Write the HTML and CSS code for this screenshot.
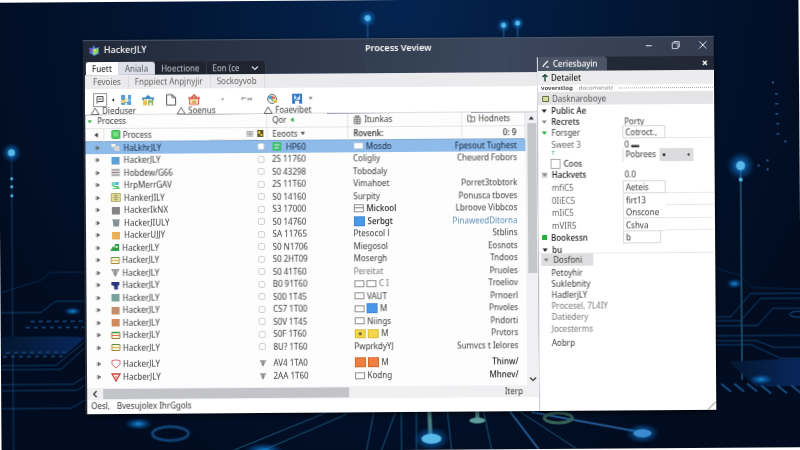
FILE: index.html
```html
<!DOCTYPE html>
<html lang="en">
<head>
<meta charset="utf-8">
<title>Process Veview</title>
<link rel="stylesheet" href="styles.css">
</head>
<body>
<svg width="0" height="0" class="defs" aria-hidden="true">
  <symbol id="play" viewBox="0 0 6 6"><path d="M1 1v4M2 1l3 2-3 2z" fill="currentColor" stroke="currentColor" stroke-width=".4"/></symbol>
  <symbol id="left" viewBox="0 0 6 6"><path d="M4.500 .5v5L1 3z" fill="currentColor"/></symbol>
  <symbol id="down" viewBox="0 0 6 6"><path d="M.5 1.500h5L3 5z" fill="currentColor"/></symbol>
  <symbol id="warn" viewBox="0 0 10 8"><path d="M5 1l4 6.500H1z" fill="none" stroke="#555" stroke-width=".9"/></symbol>
  <symbol id="square" viewBox="0 0 10 9"><path d="M1 1h8v7.500H1z" fill="currentColor"/></symbol>
  <symbol id="list" viewBox="0 0 10 9"><path d="M.5 .5h9v8h-9z" fill="#ddd"/><path d="M1 2h8M1 4.500h8M1 7h8" stroke="#8b8b8b"/><path d="M1 4.500h3" stroke="#c66"/></symbol>
  <symbol id="bars" viewBox="0 0 10 9"><path d="M1 1.500h8v6H1z" fill="#fbf6d8" stroke="#a08c3c"/><path d="M1 1.500h8" stroke="#5b8f43"/><path d="M2 4.500h6" stroke="#dbb54e"/></symbol>
  <symbol id="bars-red" viewBox="0 0 10 9"><path d="M1 1.500h8v6H1z" fill="#f5f7d8" stroke="#a37a3c"/><path d="M1 1.500h8" stroke="#3f9a4b" stroke-width="1.500"/><path d="M1 4.500h8" stroke="#d96a4a"/></symbol>
  <symbol id="funnel" viewBox="0 0 10 9"><path d="M1 1h8L5.500 8.500h-1z" fill="currentColor"/><path d="M3.500 1v4M6.500 1v4" stroke="#fff" stroke-width=".5"/></symbol>
  <symbol id="shield" viewBox="0 0 10 10"><path d="M1 1.500l4-.500 4 .5v4L5 9 1 5.500z" fill="#fff" stroke="#dc6b6b"/></symbol>
  <symbol id="alert" viewBox="0 0 10 9"><path d="M1 1h8L5 8z" fill="#fff" stroke="#c9473a" stroke-width="1.300"/><path d="M5 2.500v3" stroke="#c9473a"/></symbol>
</svg>
<div class="scene">
  <svg class="backdrop" viewBox="0 0 800 450" preserveAspectRatio="xMidYMid slice" aria-hidden="true">
    <defs>
      <radialGradient id="glow"><stop offset="0" stop-color="#1c9bf0" stop-opacity=".9"/><stop offset="1" stop-color="#0560c0" stop-opacity="0"/></radialGradient>
      <linearGradient id="chip" x2="1"><stop offset="0" stop-color="#04172f"/><stop offset="1" stop-color="#08275c"/></linearGradient>
    </defs>
    <g fill="none" stroke="#1d66a8" stroke-width="1" opacity=".75">
      <path d="M12 150V450" opacity=".65"/>
      <path d="M741 168V382" stroke="#3fa0c8"/>
      <path d="M369 18V72M505 26V72M519 24V72" stroke="#2b80c0"/>
      <path d="M0 310h40l15-11h30M0 363h55l32-26M0 367h60l27-24M0 382h72l15-9M0 388h76l11-7M0 406h70l17-10" opacity=".7"/>
      <path d="M0 290l40-12 10-8h36" opacity=".4"/>
      <path d="M715 319h15l20-23h50M715 323h25l20-22h40M715 328h42l15-17h28M715 338h85M715 343h40l18 7h27M715 347h35l30 14h20" opacity=".75"/>
      <path d="M715 270l25 8 12 12 48 2" opacity=".35"/>
      <path d="M230 450l100-40M260 450l85-36v-6M365 450l8-40M380 450l15-40M400 450v-40M415 450v-40M450 450l-4-40M490 450l-8-40M575 450l-60-40" stroke="#1f6d92"/>
      <path d="M428 410l1 26M476 410v10" stroke="#60a7a0" stroke-width="4"/>
      <path d="M530 413l105 20M507 410l30 40" stroke="#2f72b7" stroke-width="2"/>
      <ellipse cx="169" cy="432" rx="18" ry="7" stroke="#14508c" stroke-width="3"/>
      <ellipse cx="557" cy="419" rx="14" ry="5" stroke="#457a66" stroke-width="3"/>
      <ellipse cx="799" cy="317" rx="10" ry="3"/>
    </g>
    <path d="M0 334h60l25 1-20 17H0z" fill="url(#chip)"/>
    <path d="M728 364l72-3v28h-45z" fill="url(#chip)"/>
    <g stroke="#103a68" stroke-width="2" stroke-dasharray="4 4"><path d="M25 325h60M30 319h55M2 354h64M5 350h60"/></g>
    <g stroke="#174a7e" stroke-width="2"><path d="M720 386l10 8M733 386l10 8M746 386l10 8M760 388l10 8M776 388l10 8M790 388l10 8"/></g>
    <g fill="url(#glow)">
      <circle cx="12" cy="150" r="10"/><circle cx="741" cy="168" r="14"/><circle cx="369" cy="18" r="9"/><circle cx="505" cy="26" r="7"/><circle cx="519" cy="24" r="7"/>
      <ellipse cx="430" cy="439" rx="18" ry="12"/><ellipse cx="641" cy="435" rx="17" ry="10"/><ellipse cx="262" cy="450" rx="20" ry="8"/>
      <ellipse cx="72" cy="309" rx="9" ry="4"/><ellipse cx="734" cy="286" rx="8" ry="5"/><ellipse cx="760" cy="382" rx="12" ry="5"/><ellipse cx="137" cy="422" rx="14" ry="6"/>
    </g>
    <g fill="#56b9e8">
      <circle cx="12" cy="150" r="3.500"/><circle cx="12" cy="176" r="1.500"/><circle cx="12" cy="184" r="1.500"/><circle cx="12" cy="193" r="1.500"/>
      <circle cx="741" cy="168" r="4.500"/><circle cx="741" cy="182" r="2"/><circle cx="369" cy="18" r="3"/><circle cx="505" cy="26" r="2.500"/><circle cx="519" cy="24" r="2.500"/>
      <ellipse cx="430" cy="439" rx="10" ry="5"/><ellipse cx="476" cy="421" rx="8" ry="3" fill="#5f9f9c"/><ellipse cx="641" cy="435" rx="9" ry="4" fill="#3a8bd0"/>
    </g>
    <g fill="#2870ad"><circle cx="774" cy="85" r="1"/><path d="M776 96h3v1h-3zM776 106h3v1h-3zM776 116h3v1h-3zM777 126h3v1h-3zM777 136h3v1h-3z"/><circle cx="786" cy="144" r="1"/><circle cx="759" cy="168" r="1"/><circle cx="768" cy="163" r="1"/><circle cx="768" cy="172" r="1"/></g>
  </svg>

  <main class="window">
    <header class="titlebar">
      <div class="brand">
        <svg width="11" height="11" viewBox="0 0 11 11" aria-hidden="true"><path d="M5 0l1.500 3 4-1-1 4 1 3-3 .500L5 11 3 9 .5 8 1 5 0 3l3.500 0z" fill="#4a7fe0"/><path d="M4 4l5-1 1 3-3 4-3-1z" fill="#8fcf6a"/><path d="M1 3l3 0-1 5-2-1z" fill="#7a4fd0"/><path d="M5 4l2 0-1 3z" fill="#f4e36a"/></svg>
        <span>HackerJLY</span>
      </div>
      <h1>Process Veview</h1>
      <div class="controls">
        <button aria-label="Minimize"><svg width="10" height="10" viewBox="0 0 10 10"><path d="M2 5.500h6" stroke="#e4e8ee" fill="none"/></svg></button>
        <button aria-label="Maximize"><svg width="10" height="10" viewBox="0 0 10 10"><path d="M1.500 3h5.500v5.500H1.500zM3 3V1.500h5.500V7H7" stroke="#d5dae2" fill="none" stroke-width=".9"/></svg></button>
        <button aria-label="Close"><svg width="10" height="10" viewBox="0 0 10 10"><path d="M1.500 1.500l7 7M8.500 1.500l-7 7" stroke="#e4e8ee" fill="none"/></svg></button>
      </div>
    </header>

    <div class="body">
      <section class="primary">
        <nav class="tabs">
          <button class="tab active">Fuett</button>
          <button class="tab light">Aniala</button>
          <button class="tab">Hoectione</button>
          <button class="tab last">Eon (ce <svg width="8" height="6" viewBox="0 0 8 6" aria-hidden="true"><path d="M1 1.500l3 3 3-3" fill="none" stroke="#dde" stroke-width="1.200"/></svg></button>
        </nav>
        <nav class="subtabs">
          <button>Fevoies</button><button>Fnppiect Anpjnyjir</button><button>Sockoyvob</button>
        </nav>
        <div class="toolbar">
          <div class="tools">
            <div class="group first">
              <button class="boxed" aria-label="View"><svg width="12" height="12" viewBox="0 0 12 12"><path d="M3 9.500V2.500h6v5H4M4.500 5h3" fill="none" stroke="#444"/></svg></button>
              <svg width="4" height="6" viewBox="0 0 6 6" class="ink"><use href="#left"/></svg>
              <button aria-label="Modules"><svg width="12" height="12" viewBox="0 0 12 12"><path d="M1 1h4v3h3V1h3v10H7V9H5v2H1z" fill="#5a9ddc"/><path d="M1 6h4v3H1z" fill="#f1d165"/><path d="M7 5h4v3H7z" fill="#79bfe8"/><path d="M5 4h3v4H5z" fill="#e6f2c8"/></svg></button>
            </div>
            <div class="group">
              <button aria-label="Tree"><svg width="12" height="12" viewBox="0 0 12 12"><path d="M3 4l3-3 3 3z" fill="#3c8dd0"/><path d="M1 6.500V4.500h10v2" fill="none" stroke="#2b78a8" stroke-width="1.500"/><path d="M1 6.500h4v5H1z" fill="#e7c043"/><path d="M6 6.500h5v5H6z" fill="#7fb04c"/><path d="M7.500 8.500h2v3h-2z" fill="#fff"/></svg></button>
              <button aria-label="New"><svg width="12" height="12" viewBox="0 0 12 12"><path d="M1.500 1h5.500l3.500 3v7.500h-9zM7 1v3h3.500" fill="#fff" stroke="#555"/></svg></button>
              <button aria-label="Store"><svg width="12" height="12" viewBox="0 0 12 12"><path d="M1.500 5h9v6h-9z" fill="#f7e7b5" stroke="#cf5c48"/><path d="M0 4.500h12M3 4.500l3-3 3 3" stroke="#d05a45" stroke-width="1.500" fill="none"/><path d="M4 7.500h4v2H4z" fill="#d98c3c"/></svg></button>
            </div>
            <div class="group wide">
              <button aria-label="Dot"><svg width="12" height="12" viewBox="0 0 12 12"><path d="M5 5h3l-1.500 2.500z" fill="#999"/></svg></button>
              <button aria-label="Link"><svg width="12" height="12" viewBox="0 0 12 12"><path d="M1 4v3M1 5h4M7 6h4M7 4.500v3M10 4.500v3" stroke="#888" fill="none"/></svg></button>
              <button aria-label="Palette"><svg width="12" height="12" viewBox="0 0 12 12"><circle cx="6" cy="6" r="4.500" fill="#eef6ea" stroke="#5c6c78"/><path d="M3 3l3 0v3H2z" fill="#4aa3d8"/><path d="M6 3l3 1v2H6z" fill="#df6b5a"/><path d="M4 6h3v3z" fill="#6abf69"/><path d="M7 7h4v3H8z" fill="#e4b83e"/></svg></button>
              <button aria-label="Save"><svg width="12" height="12" viewBox="0 0 12 12"><path d="M1 1h10v10H8V8H4v3H1z" fill="#3777c8"/><path d="M3 2l3 3 3-3v5H3z" fill="#d5e9fa"/><path d="M4 7l4-4" stroke="#225da8"/></svg></button>
              <svg width="5" height="5" viewBox="0 0 6 6" class="mute"><use href="#down"/></svg>
            </div>
          </div>
          <div class="captions">
            <span><svg width="10" height="8"><use href="#warn"/></svg>Dieduser</span>
            <span><svg width="10" height="8"><use href="#warn"/></svg>Soenus</span>
            <span><svg width="10" height="8"><use href="#warn"/></svg>Foaevibet</span>
          </div>
        </div>

        <div class="grid">
          <table>
            <colgroup><col class="c-arrow"><col><col class="c-check"><col class="c-count"><col class="c-kind"><col class="c-group"></colgroup>
            <thead>
              <tr class="top">
                <th colspan="3"><div class="cell tight"><svg width="5" height="5" class="green"><use href="#down"/></svg>Process</div></th>
                <th><div class="cell">Qor <svg width="6" height="6" class="green"><use href="#left"/></svg></div></th>
                <th><div class="cell"><svg width="8" height="9" viewBox="0 0 8 9"><path d="M1 2h6v6.500H1zM2.500 .5h3v2h-3zM1 4.500h6M1 6.500h6M4 2v6" fill="none" stroke="#777"/></svg>Itunkas</div></th>
                <th><div class="cell"><svg width="8" height="8" viewBox="0 0 8 8"><path d="M.5 1h2.500l1 1v5H.5zM3 2.500h4.500V7H3" fill="none" stroke="#666" stroke-width=".9"/></svg>Hodnets</div></th>
              </tr>
              <tr class="second">
                <th><div class="mark"><svg width="6" height="6"><use href="#left"/></svg></div></th>
                <th class="ruled"><div class="cell name"><svg width="9" height="9" viewBox="0 0 9 9"><rect x=".5" y=".5" width="8" height="8" rx="1" fill="#52cf67" stroke="#3bb052"/><path d="M2 3h4M2 5h5" stroke="#a7f0af"/></svg>Process<svg class="end" width="7" height="7" viewBox="0 0 7 7"><path d="M0 1h7v6H0z" fill="#d2d2d2"/><path d="M0 1.500h7M0 4h7M3.500 1v6" stroke="#999" stroke-width=".7"/></svg></div></th>
                <th class="bare"><svg width="6" height="7" viewBox="0 0 6 7"><path d="M0 0h6v7H0z" fill="#5a5423"/><path d="M1 1h2v3H1zM3 4h2v2H3z" fill="#e6c93a"/></svg></th>
                <th><div class="cell">Eeoots <svg width="5" height="5"><use href="#down"/></svg></div></th>
                <th><div class="cell strong">Rovenk:</div></th>
                <th><div class="cell right strong">0: 9</div></th>
              </tr>
            </thead>
            <tbody>
              <tr class="selected"><td><svg width="6" height="6"><use href="#play"/></svg></td><td><div class="cell name"><svg width="10" height="9" viewBox="0 0 10 9"><path d="M1 1h4v3H1z" fill="#f6f3ea"/><path d="M3 3h6v5H4z" fill="#d8d5cc"/></svg>HaLkhrJLY</div></td><td><input type="checkbox" aria-label="Select"></td><td><div class="cell"><svg width="9" height="9" viewBox="0 0 9 9"><rect width="9" height="9" rx="1" fill="#45bd78"/><path d="M2 3h5M2 6h4" stroke="#d8f7e2"/></svg>&nbsp;HP60</div></td><td><div class="cell"><i class="chip"></i>Mosdo</div></td><td><div class="cell right">Fpesout Tughest</div></td></tr>
              <tr><td><svg width="6" height="6"><use href="#play"/></svg></td><td><div class="cell name"><svg width="10" height="9" color="#5c9fd2"><use href="#square"/></svg>HackerJLY</div></td><td><input type="checkbox" aria-label="Select"></td><td><div class="cell">2S 11760</div></td><td><div class="cell">Coligliy</div></td><td><div class="cell right">Cheuerd Fobors</div></td></tr>
              <tr><td><svg width="6" height="6"><use href="#play"/></svg></td><td><div class="cell name"><svg width="10" height="9"><use href="#list"/></svg>Hobdew/G66</div></td><td><input type="checkbox" aria-label="Select"></td><td><div class="cell">S0 43298</div></td><td><div class="cell">Tobodaly</div></td><td></td></tr>
              <tr><td><svg width="6" height="6"><use href="#play"/></svg></td><td><div class="cell name"><svg width="10" height="9" viewBox="0 0 10 9"><path d="M1 1h4l2 2-3 2H1z" fill="#7fd8c0"/><path d="M5 1h3v3H5z" fill="#56b8ea"/><path d="M2 5h6l1 3H2z" fill="#63cf73"/><path d="M2 6h3v1H2z" fill="#fff"/></svg>HrpMerrGAV</div></td><td><input type="checkbox" aria-label="Select"></td><td><div class="cell">2S 11T60</div></td><td><div class="cell">Vimahoet</div></td><td><div class="cell right">Porret3tobtork</div></td></tr>
              <tr><td><svg width="6" height="6"><use href="#play"/></svg></td><td><div class="cell name"><svg width="10" height="9" viewBox="0 0 10 9"><path d="M.5 .5h9v8h-9z" fill="#e2dfa0" stroke="#b5b070"/><path d="M2 4.500h6M5 1v7M3 2.500h4M3 6.500h4" stroke="#a39d55" stroke-width=".8"/></svg>HankerJILY</div></td><td><input type="checkbox" aria-label="Select"></td><td><div class="cell">S0 14160</div></td><td><div class="cell">Surpity</div></td><td><div class="cell right">Ponusca tboves</div></td></tr>
              <tr><td><svg width="6" height="6"><use href="#play"/></svg></td><td><div class="cell name"><svg width="10" height="9" color="#858585"><use href="#square"/></svg>HackerIkNX</div></td><td><input type="checkbox" aria-label="Select"></td><td><div class="cell">S3 17000</div></td><td><div class="cell strong"><i class="chip lined"></i>Mickool</div></td><td><div class="cell right">Lbroove Vibbcos</div></td></tr>
              <tr><td><svg width="6" height="6"><use href="#play"/></svg></td><td><div class="cell name"><svg width="10" height="9" viewBox="0 0 10 9"><path d="M1.500 1h7L8 8.500H2.500z" fill="#869092"/><path d="M1 1.500h8" stroke="#b5bbbb"/></svg>HackerJIULY</div></td><td><input type="checkbox" aria-label="Select"></td><td><div class="cell">S0 14760</div></td><td><div class="cell strong"><i class="chip blue"></i>Serbgt</div></td><td><div class="cell right linkish">PinaweedDitorna</div></td></tr>
              <tr><td><svg width="6" height="6"><use href="#play"/></svg></td><td><div class="cell name"><svg width="10" height="9" color="#e8b055"><use href="#square"/></svg>HackerUJJY</div></td><td><input type="checkbox" aria-label="Select"></td><td><div class="cell">SA 11765</div></td><td><div class="cell">Ptesocol l</div></td><td><div class="cell right">Stblins</div></td></tr>
              <tr><td class="mute"><svg width="6" height="6"><use href="#play"/></svg></td><td><div class="cell name out"><svg width="10" height="9" viewBox="0 0 10 9"><path d="M0 8l3-5 1 2 1-4h4v7z" fill="#2f9e45"/><path d="M5.500 3h2v2h-2z" fill="#d6f5d8"/></svg>HackerJLY</div></td><td><input type="checkbox" aria-label="Select"></td><td><div class="cell">S0 N1706</div></td><td><div class="cell">Miegosol</div></td><td><div class="cell right">Eosnots</div></td></tr>
              <tr><td><svg width="6" height="6"><use href="#play"/></svg></td><td><div class="cell name out"><svg width="10" height="9"><use href="#bars"/></svg>HackerJLY</div></td><td><input type="checkbox" aria-label="Select"></td><td><div class="cell">S0 2HT09</div></td><td><div class="cell">Mosergh</div></td><td><div class="cell right">Tndoos</div></td></tr>
              <tr><td><svg width="6" height="6"><use href="#play"/></svg></td><td><div class="cell name out"><svg width="10" height="9" color="#8d8d8d"><use href="#funnel"/></svg>HackerJLY</div></td><td><input type="checkbox" aria-label="Select"></td><td><div class="cell">S0 41T60</div></td><td><div class="cell pale">Pereitat</div></td><td><div class="cell right">Pruoles</div></td></tr>
              <tr><td><svg width="6" height="6"><use href="#play"/></svg></td><td><div class="cell name out"><svg width="10" height="9" viewBox="0 0 10 9"><path d="M1 1h8v3L7.500 5v3.500h-3.500L3.500 5 1 4z" fill="#2b3583"/></svg>HackerJLY</div></td><td><input type="checkbox" aria-label="Select"></td><td><div class="cell">B0 91T60</div></td><td><div class="cell pale"><i class="chip"></i><i class="chip"></i>C I</div></td><td><div class="cell right">Troeliov</div></td></tr>
              <tr><td><svg width="6" height="6"><use href="#play"/></svg></td><td><div class="cell name out"><svg width="10" height="9" color="#7ba39b"><use href="#square"/></svg>HackerJLY</div></td><td><input type="checkbox" aria-label="Select"></td><td><div class="cell">S00 1T45</div></td><td><div class="cell"><i class="chip"></i>VAUT</div></td><td><div class="cell right">Prnoerl</div></td></tr>
              <tr><td><svg width="6" height="6"><use href="#play"/></svg></td><td><div class="cell name out"><svg width="10" height="9" color="#c58c6c"><use href="#square"/></svg>HackerJLY</div></td><td><input type="checkbox" aria-label="Select"></td><td><div class="cell">CS7 1T00</div></td><td><div class="cell"><i class="chip"></i><i class="chip blue"></i>M</div></td><td><div class="cell right">Pnvoles</div></td></tr>
              <tr><td><svg width="6" height="6"><use href="#play"/></svg></td><td><div class="cell name out"><svg width="10" height="9" color="#d08a5c"><use href="#square"/></svg>HackerJLY</div></td><td><input type="checkbox" aria-label="Select"></td><td><div class="cell">S0V 1T45</div></td><td><div class="cell"><i class="chip"></i>Niings</div></td><td><div class="cell right">Pndorti</div></td></tr>
              <tr><td><svg width="6" height="6"><use href="#play"/></svg></td><td><div class="cell name out"><svg width="10" height="9"><use href="#bars-red"/></svg>HackerJLY</div></td><td><input type="checkbox" aria-label="Select"></td><td><div class="cell">S0F 1T60</div></td><td><div class="cell"><i class="chip yellow dot"></i><i class="chip yellow"></i>M</div></td><td><div class="cell right">Prvtors</div></td></tr>
              <tr><td><svg width="6" height="6"><use href="#play"/></svg></td><td><div class="cell name out"><svg width="10" height="9"><use href="#bars"/></svg>HackerJLY</div></td><td><input type="checkbox" aria-label="Select"></td><td><div class="cell">8U? 1T60</div></td><td><div class="cell">PwprkdyYJ</div></td><td><div class="cell right">Sumvcs t Ielores</div></td></tr>
              <tr class="spaced"><td><svg width="6" height="6"><use href="#play"/></svg></td><td><div class="cell name out"><svg width="10" height="10"><use href="#shield"/></svg>HackerJLY</div></td><td><svg width="8" height="8" color="#888"><use href="#funnel"/></svg></td><td><div class="cell">AV4 1TA0</div></td><td><div class="cell"><i class="chip orange"></i><i class="chip orange"></i>M</div></td><td><div class="cell right strong">Thinw/</div></td></tr>
              <tr class="final"><td><svg width="6" height="6"><use href="#play"/></svg></td><td><div class="cell name out"><svg width="10" height="9"><use href="#alert"/></svg>HacberJLY</div></td><td><svg width="8" height="8" color="#888"><use href="#funnel"/></svg></td><td><div class="cell">2AA 1T60</div></td><td><div class="cell"><i class="chip"></i>Kodng</div></td><td><div class="cell right strong">Mhnev/</div></td></tr>
            </tbody>
          </table>
          <div class="vscroll">
            <svg width="6" height="6" viewBox="0 0 6 6"><path d="M.5 4.500h5L3 1z" fill="#333"/></svg>
            <div class="thumb"></div>
            <svg width="8" height="6" viewBox="0 0 8 6"><path d="M1 1.500l3 3 3-3" fill="none" stroke="#333" stroke-width="1.200"/></svg>
          </div>
        </div>
        <div class="hscroll">
          <svg width="6" height="8" viewBox="0 0 6 8"><path d="M4.500 1L1.500 4l3 3" fill="none" stroke="#333" stroke-width="1.200"/></svg>
          <div class="thumb"></div>
          <span>Iterp</span>
        </div>
        <footer class="status"><span>Oesl,</span><span>Bvesujolex IhrGgols</span></footer>
      </section>

      <aside class="side">
        <div class="side-tabs">
          <button class="side-tab"><svg width="8" height="8" viewBox="0 0 8 8"><path d="M1 7l1-2 4-4M4 7h3" fill="none" stroke="#fff" stroke-width="1.200"/></svg>Ceriesbayin</button>
          <button class="close" aria-label="Close panel"><svg width="6" height="6" viewBox="0 0 6 6"><path d="M1 1l4 4M5 1L1 5" stroke="#fff" stroke-width="1.400"/></svg></button>
        </div>
        <h2 class="bar"><svg width="6" height="8" viewBox="0 0 6 8"><path d="M3 .5v7M.5 3L3 .8 5.500 3" fill="none" stroke="#243" stroke-width="1.400"/></svg>Detailet</h2>
        <div class="dotted"><b>voverstlog</b><span>docomsnotz</span></div>
        <h2 class="bar grey"><svg width="7" height="6" viewBox="0 0 7 6"><path d="M.5 .5h6v5h-6z" fill="#d5dd9c" stroke="#667040"/></svg>Dasknaroboye</h2>
        <form class="props">
          <div class="row h11"><span class="label strong"><svg width="6" height="6"><use href="#down"/></svg>Public Ae</span></div>
          <div class="row h10"><span class="label strong"><svg width="6" height="6" class="mute"><use href="#down"/></svg>Recrets</span><span>Porty</span></div>
          <div class="row h13 ruled"><label class="label" for="f1"><svg width="6" height="6" class="green"><use href="#down"/></svg>Forsger</label><input id="f1" value="Cotroct.,"></div>
          <div class="row h10"><span class="label indent">Sweet 3</span><span>0 ▬</span></div>
          <div class="row h20">
            <div class="stack"><small>T</small><label class="check"><input type="checkbox">Coos</label></div>
            <div class="picker"><span>Pobrees</span><button type="button" aria-label="Step"><i></i><svg width="4" height="5" viewBox="0 0 6 6"><use href="#left"/></svg></button></div>
          </div>
          <div class="row h12"><span class="label strong"><svg width="6" height="6" class="mute tile"><use href="#down"/></svg>Hackvets</span><span>0.0</span></div>
          <div class="row h13 ruled"><label class="label indent" for="f2">mfiC5</label><input id="f2" value="Aeteis"></div>
          <div class="row h12 ruled"><label class="label indent" for="f3">0IiEC5</label><input id="f3" class="plain" value="firt13"></div>
          <div class="row h13 ruled"><label class="label indent" for="f4">mIiC5</label><input id="f4" class="plain" value="Onscone"></div>
          <div class="row h12 ruled"><label class="label indent" for="f5">mVIR5</label><input id="f5" class="plain" value="Cshva"></div>
          <div class="row h13"><label class="label strong" for="f6"><svg width="5" height="5" class="green" viewBox="0 0 5 5"><path d="M0 0h5v5H0z" fill="currentColor"/></svg>Bookessn</label><input id="f6" class="short" value="b"></div>
          <div class="row h10 under"><span class="label strong"><svg width="6" height="6"><use href="#down"/></svg>bu</span></div>
        </form>
        <button class="toggle"><svg width="6" height="6" class="mute"><use href="#down"/></svg>Dosfoni</button>
        <ul class="links">
          <li><a href="#">Petoyhir</a></li><li><a href="#">Suklebnity</a></li><li><a href="#">HadlerjLY</a></li><li class="pale"><a href="#">Procesel, 7L4IY</a></li><li class="pale"><a href="#">Datiedery</a></li><li class="pale tall"><a href="#">Jocesterms</a></li><li class="tall"><a href="#">Aobrp</a></li>
        </ul>
        <svg class="grip" width="9" height="9" viewBox="0 0 9 9" aria-hidden="true"><path d="M1 8.500l7.500-7.500" stroke="#777" fill="none"/></svg>
      </aside>
    </div>
  </main>
</div>
</body>
</html>
```

FILE: styles.css
```css
* { box-sizing: border-box; }
body {
  margin: 0;
  background: #fff;
  overflow: hidden;
  font: 8px/12px "Noto Sans", "Open Sans", sans-serif;
  color: #3a3a3a;
}
.defs { position: absolute; }
button, input { font: inherit; color: inherit; margin: 0; padding: 0; border: 0; background: none; border-radius: 0; }
svg { display: block; flex: none; }
h1, h2 { margin: 0; font-size: inherit; font-weight: 500; }
a { color: inherit; text-decoration: none; }

.scene {
  position: relative;
  display: flex;
  width: 100vw;
  height: 100vh;
  padding: 38px 85px 38px 84px;
  background: radial-gradient(ellipse at 50% 0, #042450 0, #021532 45%, #010c20 80%);
  transform: rotate(-0.4deg);
}
.backdrop { position: absolute; inset: 0; width: 100%; height: 100%; }
.window {
  position: relative;
  flex: 1;
  min-width: 0;
  display: flex;
  flex-direction: column;
  background: linear-gradient(100deg, rgba(33, 41, 56, .95), rgba(62, 73, 93, .93) 60%, rgba(50, 60, 80, .95));
  box-shadow: 0 2px 6px #000a;
  border-top: 1px solid #4b586c;
}
.titlebar {
  display: grid;
  grid-template-columns: 1fr auto 1fr;
  align-items: start;
  height: 21px;
  padding: 3px 6px 0;
  color: #fff;
  font-size: 9px;
}
.brand { display: flex; gap: 4px; align-items: center; font-weight: 500; }
.titlebar h1 { font-weight: 600; }
.controls { display: flex; justify-content: flex-end; gap: 17px; }

.body { flex: 1; min-height: 0; display: grid; grid-template-columns: minmax(0, 1fr) 177px; padding-left: 2px; }
.primary { display: flex; flex-direction: column; }
.tabs { display: flex; height: 13px; padding-left: 1px; color: #c3c8d0; }
.tab { padding: 0 6px; height: 13px; line-height: 13px; background: #20242e; border-right: 1px solid #333a47; }
.tab.active { background: #fff; color: #333; border: 0; border-top-left-radius: 2px; font-weight: 500; }
.tab.light { background: #dcdfe9; color: #555; border: 0; border-top-right-radius: 3px; padding: 0 7px; }
.tab.last { display: flex; align-items: center; gap: 11px; border-radius: 0 3px 0 0; }
.subtabs { display: flex; height: 14px; padding-left: 2px; background: #ebebee; color: #666; }
.subtabs button { padding: 0 7px 0 6px; border-right: 1px solid #dcdce0; }
.toolbar { background: #fff; height: 26px; border-bottom: 1px solid #d9dde2; }
.tools { display: flex; gap: 10px; padding: 4px 0 0 9px; }
.group { display: flex; align-items: center; gap: 11px; height: 13px; }
.group.first { gap: 5px; }
.group.wide { gap: 13px; margin-left: 6px; }
.group.wide > svg { margin-left: -8px; }
.boxed { outline: 1px solid #999; }
.ink { color: #333; }
.mute { color: #888; }
.green { color: #27ae3b; }
.captions { display: grid; grid-template-columns: 86px 87px auto; padding-left: 5px; height: 9px; line-height: 9px; }
.captions span { display: flex; align-items: center; gap: 2px; }

.grid { display: flex; flex: 1; min-height: 0; background: #fdfdfe; }
table { flex: 1; width: 0; height: max-content; table-layout: fixed; border-collapse: collapse; }
.c-arrow { width: 18px; }
.c-check { width: 10px; }
.c-count { width: 81px; }
.c-kind { width: 114px; }
.c-group { width: 63px; }
th, td { padding: 0; height: 13px; font-weight: 400; text-align: left; }
th { border-right: 1px solid #e2e4e8; }
th.ruled { border-right: 0; }
.top th { border-bottom: 1px solid #e3e5e9; }
.second th { border-bottom: 1px dotted #7d9cba; }
tbody tr:nth-child(even) td { height: 12px; }
tbody .spaced td { height: 18px; padding-top: 4px; }
tbody tr.final td { height: 14px; }
td > svg { margin-left: 9px; }
td:first-child { color: #666; }
.mark { padding-left: 8px; }
td:nth-child(3) > svg { margin-left: 0; }
.cell { display: flex; align-items: center; gap: 3px; height: 12px; padding-left: 5px; white-space: nowrap; }
.top .cell.tight { padding-left: 2px; gap: 5px; }
.cell.name { gap: 3px; padding-left: 7px; }
.cell.name.out { gap: 2px; padding-left: 6px; }
.cell .end { margin-left: auto; margin-right: 4px; }
.cell.right { justify-content: flex-end; padding: 0 8px 0 0; }
.strong { font-weight: 500; color: #222; }
.pale { color: #777; }
.linkish { color: #5c8db5; }
.selected { background: #8ebbe9; color: #14263c; }
td input[type="checkbox"] {
  appearance: none;
  display: block;
  width: 7px;
  height: 7px;
  border: 1px solid #d0d0d4;
  border-radius: 2px;
  background: #fff;
}
.chip { width: 10px; height: 7px; border: 1px solid #8d8d8d; background: #fff; flex: none; }
.chip.lined { height: 8px; background: linear-gradient(#fff 2px, #777 2px, #777 3px, #fff 3px); }
.chip.blue { height: 10px; width: 11px; background: #4a98e8; border-color: #3f87d3; }
.chip.yellow { height: 9px; width: 11px; background: #f2d84a; border-color: #d8bc3a; }
.chip.dot { background: radial-gradient(circle, #6c5a10 1px, #f2d84a 2px); }
.chip.orange { height: 10px; width: 11px; background: #f08040; border-color: #cf682f; }
.chip + .chip { margin-left: -1px; }
.selected .chip { border-color: #b6c6da; }

.vscroll { width: 12px; display: flex; flex-direction: column; align-items: center; background: #f0f0f2; padding: 3px 0; }
.vscroll .thumb { width: 9px; flex: 0 0 56%; margin: 2px 0 auto; background: #c6c7ca; }
.hscroll { display: flex; align-items: center; height: 12px; gap: 5px; padding: 0 16px 0 5px; background: #f0f0f2; }
.hscroll .thumb { width: 57%; height: 10px; background: #c3c4c7; }
.hscroll span { margin-left: auto; }
.status { display: flex; gap: 7px; height: 14px; padding-left: 4px; background: #fff; color: #333; }

.side { position: relative; background: #fff; border-left: 1px solid #dfe3e8; margin-top: -2px; padding-right: 1px; }
.side-tabs { display: flex; justify-content: space-between; height: 14px; background: #222836; padding-right: 6px; margin-right: -1px; }
.side-tab { display: flex; align-items: center; gap: 3px; width: 69px; padding-left: 4px; background: #4b5566; color: #fff; font-weight: 500; border-radius: 3px 3px 0 0; }
.bar { display: flex; align-items: center; gap: 3px; height: 14px; padding-left: 4px; background: #ececee; color: #222; }
.dotted { display: flex; align-items: center; gap: 6px; height: 7px; padding-left: 3px; font-size: 6px; line-height: 7px; color: #888; overflow: hidden; }
.dotted b { color: #444; }
.dotted::after { content: ""; flex: 1; border-top: 1px dotted #aaa; }
.bar.grey { height: 13px; background: #e4e4e7; color: #555; font-weight: 400; }
.row { display: grid; grid-template-columns: 84px minmax(0, 1fr); align-items: center; }
.row > :nth-child(2) { white-space: nowrap; }
.row > span:nth-child(2) { padding-left: 2px; }
.h10 { height: 10px; }
.h11 { height: 11px; }
.h12 { height: 12px; }
.h13 { height: 13px; }
.h20 { height: 20px; align-items: start; }
.label { display: flex; align-items: center; gap: 4px; padding-left: 3px; }
.label.indent { padding-left: 13px; color: #666; }
.tile { background: #ddd; }
.ruled { background: linear-gradient(#e8e8ea, #e8e8ea) right bottom / 48px 1px no-repeat; }
.under { border-bottom: 1px solid #e8e8ea; }
.row > input { width: 43px; height: 100%; padding: 0 2px; border: 1px solid #d8d8dc; background: #fff; }
.row > input.plain { border-color: #fff #fff #e2e2e6 #e2e2e6; }
.row > input.short { width: 38px; }
.stack { padding-left: 12px; }
.stack small { display: block; font-size: 6px; line-height: 9px; color: #4a9aa0; padding-left: 1px; }
.check { display: flex; align-items: center; gap: 3px; height: 11px; font-weight: 500; }
.check input { appearance: none; width: 10px; height: 10px; border: 1px solid #aaa; background: #fff; }
.picker { display: flex; height: 13px; padding-left: 2px; border-left: 1px solid #ddd; }
.picker span { width: 34px; }
.picker button { display: flex; align-items: center; justify-content: space-between; width: 34px; padding: 0 3px; background: #dcdcdf; color: #333; }
.picker i { width: 3px; height: 3px; border-radius: 50%; background: #333; }
.toggle { display: flex; align-items: center; gap: 4px; width: 52px; height: 12px; margin-left: 2px; padding-left: 2px; background: #dedee0; }
.links { list-style: none; margin: 1px 0 0; padding: 0 0 0 12px; line-height: 11px; }
.links .tall { line-height: 14px; }
.grip { position: absolute; right: 0; bottom: 0; }
```
